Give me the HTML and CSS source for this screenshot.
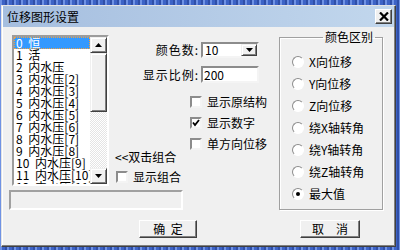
FILE: index.html
```html
<!DOCTYPE html>
<html lang="zh">

<head>
    <meta charset="utf-8">
    <title>位移图形设置</title>
    <link rel="stylesheet" href="styles.css">
</head>

<body>
    <div class="dialog">
        <div class="titlebar">
            <span class="title">位移图形设置</span>
            <span class="close">
                <svg width="10" height="9" viewBox="0 0 10 9"><path d="M1 0.5 L9 8.5 M9 0.5 L1 8.5" stroke="#000" stroke-width="2.2" fill="none"/></svg>
            </span>
        </div>

        <div class="content">
            <div class="main">
                <div class="left">
                    <div class="left-top">
                        <div class="listbox">
                            <ul class="items">
                                <li class="selected">0 恒</li>
                                <li>1 活</li>
                                <li>2 内水压</li>
                                <li>3 内水压[2]</li>
                                <li>4 内水压[3]</li>
                                <li>5 内水压[4]</li>
                                <li>6 内水压[5]</li>
                                <li>7 内水压[6]</li>
                                <li>8 内水压[7]</li>
                                <li>9 内水压[8]</li>
                                <li>10 内水压[9]</li>
                                <li>11 内水压[10]</li>
                                <li>12 内水压[11]</li>
                            </ul>
                            <div class="scrollbar">
                                <div class="sb-btn">
                                    <svg width="7" height="4" viewBox="0 0 7 4"><path d="M3.5 0 L7 4 L0 4 Z" fill="#000"/></svg>
                                </div>
                                <div class="sb-thumb"></div>
                                <div class="sb-track"></div>
                                <div class="sb-btn">
                                    <svg width="7" height="4" viewBox="0 0 7 4"><path d="M0 0 L7 0 L3.5 4 Z" fill="#000"/></svg>
                                </div>
                            </div>
                        </div>

                        <div class="mid">
                            <div class="field-row">
                                <label class="field-label">颜色数:</label>
                                <div class="combo">
                                    <span class="combo-text">10</span>
                                    <span class="combo-btn">
                                        <svg width="7" height="4" viewBox="0 0 7 4"><path d="M0 0 L7 0 L3.5 4 Z" fill="#000"/></svg>
                                    </span>
                                </div>
                            </div>
                            <div class="field-row second">
                                <label class="field-label">显示比例:</label>
                                <div class="textbox">200</div>
                            </div>

                            <div class="check-row first">
                                <span class="checkbox"></span>显示原结构
                            </div>
                            <div class="check-row">
                                <span class="checkbox">
                                    <svg width="8" height="8" viewBox="0 0 8 8"><path d="M1 3.5 L3 6 L7 1" stroke="#000" stroke-width="1.8" fill="none"/></svg>
                                </span>显示数字
                            </div>
                            <div class="check-row">
                                <span class="checkbox"></span>单方向位移
                            </div>

                            <div class="hint">&lt;&lt;双击组合</div>
                            <div class="check-row combine">
                                <span class="checkbox"></span>显示组合
                            </div>
                        </div>
                    </div>
                    <div class="status"></div>
                </div>

                <fieldset class="group">
                    <legend>颜色区别</legend>
                    <div class="radio-row"><span class="radio"></span>X向位移</div>
                    <div class="radio-row"><span class="radio"></span>Y向位移</div>
                    <div class="radio-row"><span class="radio"></span>Z向位移</div>
                    <div class="radio-row"><span class="radio"></span>绕X轴转角</div>
                    <div class="radio-row"><span class="radio"></span>绕Y轴转角</div>
                    <div class="radio-row"><span class="radio"></span>绕Z轴转角</div>
                    <div class="radio-row"><span class="radio on"></span>最大值</div>
                </fieldset>
            </div>

            <div class="buttons">
                <button class="btn ok">确 定</button>
                <button class="btn cancel">取　消</button>
            </div>
        </div>
    </div>
</body>

</html>
```

FILE: styles.css
```css
body {
    margin: 0;
    width: 400px;
    height: 250px;
    overflow: hidden;
    font-family: "Noto Sans CJK SC", "Liberation Sans", sans-serif;
    font-size: 12px;
    line-height: 12px;
    color: #000;
    background-color: #3d63c6;
    background-image: repeating-linear-gradient(90deg, #6f92e4 0 2px, #3d63c6 2px 5px, #2f4fa8 5px 7px);
}

/* dialog frame */
.dialog {
    box-sizing: border-box;
    width: 395px;
    height: 242px;
    margin: 5px 0 0 1px;
    padding: 0 1px 1px 1px;
    background-color: #f0f0f0;
    border: 1px solid;
    border-color: #e3e3e3 #404040 #404040 #e3e3e3;
    box-shadow: inset -1px -1px #808080, inset 1px 1px #fff;
}

.titlebar {
    height: 21px;
    display: flex;
    align-items: center;
    justify-content: space-between;
    padding-left: 4px;
    background: linear-gradient(to right, #a5bedf, #c2d7ed);
}

.title {
    font-size: 12px;
    line-height: 12px;
}

.close {
    box-sizing: border-box;
    width: 17px;
    height: 15px;
    margin-right: 2px;
    display: flex;
    align-items: center;
    justify-content: center;
    background-color: #f0f0f0;
    border: 1px solid;
    border-color: #fff #404040 #404040 #fff;
    box-shadow: inset -1px -1px #808080;
}

.content {
    padding: 4px 0 0 6px;
}

.main {
    display: flex;
    align-items: flex-start;
}

.left {
    width: 270px;
    padding-top: 4px;
}

.left-top {
    display: flex;
    align-items: flex-start;
}

/* list box */
.listbox {
    box-sizing: border-box;
    width: 97px;
    height: 151px;
    margin-left: 3px;
    display: flex;
    border: 2px solid;
    border-color: #9c9c9c #fff #fff #9c9c9c;
    background-color: #fff;
}

.items {
    list-style: none;
    margin: 0;
    padding: 0;
    width: 76px;
    overflow: hidden;
}

.items li {
    box-sizing: border-box;
    height: 12px;
    line-height: 12px;
    padding-left: 2px;
    white-space: nowrap;
    word-spacing: 3px;
}

.items li.selected {
    background-color: #3399ff;
    color: #fff;
    outline: 1px dotted #f0a040;
    outline-offset: -1px;
}

.scrollbar {
    width: 17px;
    display: flex;
    flex-direction: column;
}

.sb-btn,
.sb-thumb,
.combo-btn {
    box-sizing: border-box;
    background-color: #f0f0f0;
    border: 1px solid;
    border-color: #f0f0f0 #404040 #404040 #f0f0f0;
    box-shadow: inset 1px 1px #fff, inset -1px -1px #808080;
}

.sb-btn {
    height: 16px;
    display: flex;
    align-items: center;
    justify-content: center;
}

.sb-thumb {
    height: 59px;
}

.sb-track {
    flex: 1;
    background-image: repeating-conic-gradient(#e4e4e4 0 25%, #fff 0 50%);
    background-size: 2px 2px;
}

/* middle controls */
.mid {
    margin-left: 6px;
    padding-top: 7px;
}

.field-row {
    display: flex;
    align-items: center;
}

.field-row.second {
    margin-top: 8px;
}

.field-label {
    width: 84px;
    padding-right: 2px;
    text-align: right;
    letter-spacing: 1px;
}

.combo,
.textbox {
    box-sizing: border-box;
    width: 58px;
    background-color: #fff;
    border: 2px solid;
    border-color: #8c8c8c #f4f4f4 #f4f4f4 #8c8c8c;
}

.combo {
    height: 16px;
    display: flex;
    align-items: center;
    justify-content: space-between;
}

.combo-text {
    padding-left: 2px;
}

.combo-btn {
    width: 16px;
    height: 12px;
    display: flex;
    align-items: center;
    justify-content: center;
}

.textbox {
    height: 17px;
    padding-left: 1px;
    line-height: 13px;
}

.check-row {
    display: flex;
    align-items: center;
    height: 12px;
    margin-left: 75px;
    margin-top: 9px;
}

.check-row.first {
    margin-top: 13px;
}

.checkbox {
    box-sizing: border-box;
    width: 12px;
    height: 12px;
    margin-right: 5px;
    display: flex;
    align-items: center;
    justify-content: center;
    background-color: #fff;
    border: 2px solid;
    border-color: #8c8c8c #f4f4f4 #f4f4f4 #8c8c8c;
}

.hint {
    margin-top: 1px;
    height: 12px;
}

.check-row.combine {
    margin-left: 1px;
    margin-top: 8px;
}

.status {
    box-sizing: border-box;
    width: 174px;
    height: 20px;
    margin-top: 4px;
    border: 2px solid;
    border-color: #a0a0a0 #fff #fff #a0a0a0;
}

/* group box */
.group {
    box-sizing: border-box;
    width: 104px;
    height: 179px;
    margin: 0;
    padding: 8px 0 0 12px;
    border: 1px solid #a0a0a0;
    box-shadow: inset 1px 1px #fff, 1px 1px #fff;
}

.group legend {
    margin-left: auto;
    margin-right: 7px;
    padding: 0 2px;
    line-height: 12px;
}

.radio-row {
    display: flex;
    align-items: center;
    height: 22px;
}

.radio {
    box-sizing: border-box;
    width: 12px;
    height: 12px;
    margin-right: 5px;
    border-radius: 50%;
    border: 1px solid;
    border-color: #8c8c8c #fff #fff #8c8c8c;
    background-color: #fff;
    display: flex;
    align-items: center;
    justify-content: center;
}

.radio.on::after {
    content: "";
    width: 4px;
    height: 4px;
    border-radius: 50%;
    background-color: #000;
}

/* buttons */
.buttons {
    display: flex;
    margin-top: 10px;
    padding-left: 130px;
}

.btn {
    box-sizing: border-box;
    height: 18px;
    padding: 0;
    font-family: inherit;
    font-size: 12px;
    line-height: 12px;
    color: #000;
    background-color: #f0f0f0;
    border: 1px solid;
    border-color: #fff #404040 #404040 #fff;
    box-shadow: inset -1px -1px #808080;
}

.btn.ok {
    width: 58px;
    word-spacing: 3px;
}

.btn.cancel {
    width: 60px;
    margin-left: 103px;
}
```
